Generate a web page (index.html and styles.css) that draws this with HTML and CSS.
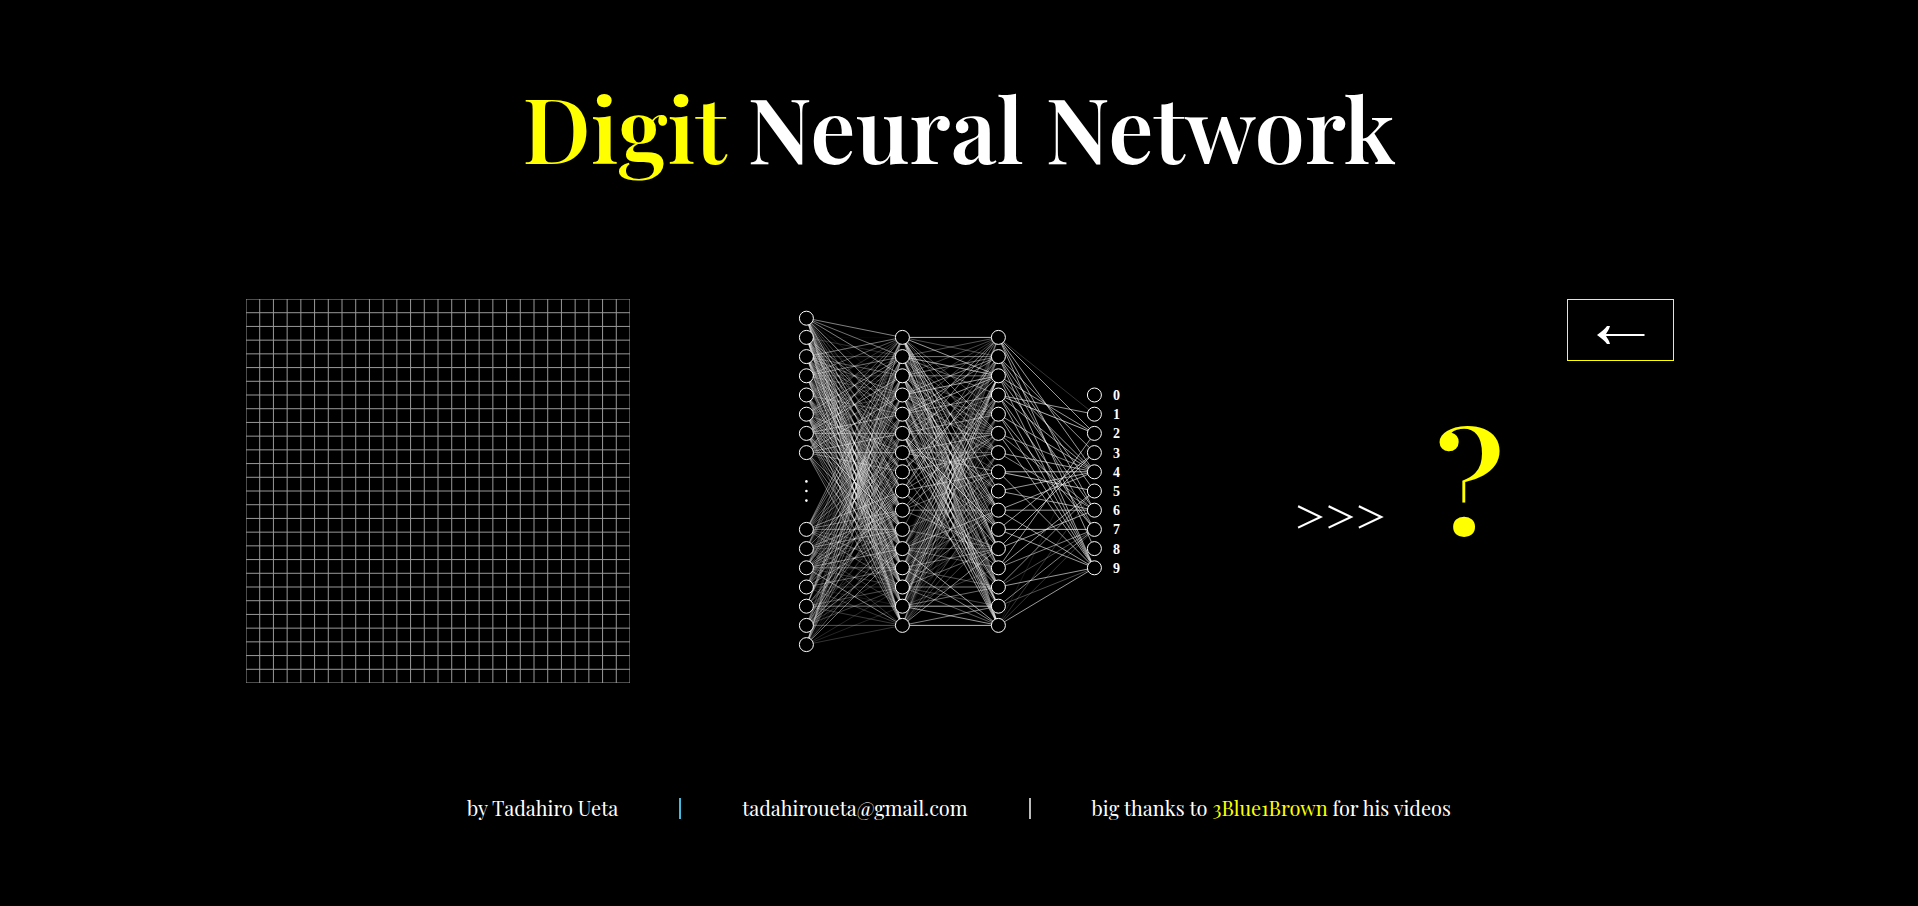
FILE: index.html
```html
<!DOCTYPE html>
<html lang="en">
<head>
  <meta charset="utf-8">
  <meta name="viewport" content="width=device-width, initial-scale=1">
  <title>Digit Neural Network</title>
  <link rel="stylesheet" href="styles.css">
</head>
<body>
  <div class="page">
    <header>
      <h1 class="title"><span class="accent">Digit</span> Neural Network</h1>
    </header>

    <main class="stage">
      <svg class="panel pad" viewBox="0 0 384 384" role="img" aria-label="Drawing pad"></svg>
      <svg class="panel network" viewBox="0 0 384 384" role="img" aria-label="Neural network"></svg>
      <section class="panel result">
        <button class="back" type="button" aria-label="Clear">
          <svg class="arrow" viewBox="0 0 48 20" aria-hidden="true">
            <path d="M0 10C4 7 8 4 10 1H13C12 5 10 7 9 9H47.500V11H9C10 13 12 15 13 19H10C8 16 4 13 0 10Z"/>
          </svg>
        </button>
        <div class="guess">
          <span class="chevrons">&gt;&gt;&gt;</span>
          <output class="digit">?</output>
        </div>
      </section>
    </main>

    <footer class="footer">
      <span>by Tadahiro Ueta</span>
      <span class="bar bar-blue"></span>
      <span>tadahiroueta@gmail.com</span>
      <span class="bar"></span>
      <span>big thanks to <a class="accent" href="#">3Blue1Brown</a> for his videos</span>
    </footer>
  </div>
  <script src="script.js"></script>
</body>
</html>
```

FILE: styles.css
```css
* {
  box-sizing: border-box;
}

body {
  margin: 0;
  background: #000;
  color: #fff;
  font-family: "Playfair Display", "Liberation Serif", serif;
}

.page {
  min-height: 100vh;
  display: flex;
  flex-direction: column;
  align-items: center;
  justify-content: space-between;
  padding: 65px 0 82px;
}

.title {
  margin: 0;
  font-size: 90px;
  line-height: 124px;
  font-weight: 600;
  text-align: center;
}

.accent {
  color: #ff0;
  text-decoration: none;
}

.stage {
  width: 100%;
  padding: 0 244px 0 246px;
  display: flex;
  justify-content: space-between;
}

.panel {
  width: 384px;
  height: 384px;
}

.grid-line {
  stroke: #999;
  stroke-width: 1;
}

.edge {
  stroke: #fff;
  stroke-width: 1;
}

.node {
  fill: #000;
  stroke: #fff;
  stroke-width: 1;
}

.dot {
  fill: #fff;
}

.label {
  fill: #fff;
  font-family: "Liberation Serif", serif;
  font-size: 14px;
  font-weight: 700;
}

.result {
  display: flex;
  flex-direction: column;
}

.back {
  align-self: flex-end;
  width: 107px;
  height: 62px;
  padding: 10px 0 0;
  display: flex;
  align-items: center;
  justify-content: center;
  background: none;
  border: 1px solid #ff0;
  cursor: pointer;
}

.arrow {
  width: 48px;
  height: 20px;
  fill: #fff;
}

.guess {
  display: flex;
  align-items: baseline;
  gap: 50px;
  padding: 36px 0 0 4px;
}

.chevrons {
  font-size: 50px;
}

.digit {
  color: #ff0;
  font-size: 140px;
  line-height: 160px;
  font-weight: 600;
}

.footer {
  display: flex;
  align-items: center;
  justify-content: center;
  gap: 61px;
  font-size: 20px;
  line-height: 32px;
}

.bar {
  width: 2px;
  height: 21px;
  background: #bbb;
}

.bar-blue {
  background: #4bd;
}
```

FILE: script.js
```js
const SVG = "http://www.w3.org/2000/svg";

function add(parent, tag, attrs, text) {
  const el = document.createElementNS(SVG, tag);
  for (const key in attrs) el.setAttribute(key, attrs[key]);
  if (text !== undefined) el.textContent = text;
  parent.appendChild(el);
}

// Drawing pad: 28 x 28 cells
const pad = document.querySelector(".pad");
for (let i = 0; i <= 28; i++) {
  const p = (i * 384) / 28;
  add(pad, "line", { class: "grid-line", x1: p, y1: 0, x2: p, y2: 384 });
  add(pad, "line", { class: "grid-line", x1: 0, y1: p, x2: 384, y2: p });
}

// Network layers, given as row numbers on a 20-row canvas
const range = (from, to) => Array.from({ length: to - from + 1 }, (_, i) => from + i);
const step = 384 / 20;
const layers = [
  { x: 38.4, rows: [...range(1, 8), ...range(12, 18)] },
  { x: 134.4, rows: range(2, 17) },
  { x: 230.4, rows: range(2, 17) },
  { x: 326.4, rows: range(5, 14) }
];

// Edge strengths from each node of the last hidden layer to the outputs 0-9
const outputEdges = [
  "0260606060", "0006060506", "0060606006", "0670600606",
  "0000600606", "0000505006", "0000605000", "0000770006",
  "0000606000", "0000606006", "0006000706", "0006006000",
  "0060060500", "0000050306", "0000000503", "0010020206"
];

let seed = 73;
function random() {
  seed = (seed + 0x6d2b79f5) | 0;
  let t = Math.imul(seed ^ (seed >>> 15), 1 | seed);
  t = (t + Math.imul(t ^ (t >>> 7), 61 | t)) ^ t;
  return ((t ^ (t >>> 14)) >>> 0) / 4294967296;
}

function strength(layer, i, j) {
  if (layer === 2) return Number(outputEdges[i][j]) / 10;
  const r = random();
  if (layer === 0) {
    if (i === 0 && j === 0) return 0.5;
    if (i === 14 && j === 15) return 0.2;
    if (i === 7 && j === 6) return 0.5;
    if (i < 8) return j - i > 3 ? 0.2 + r * 0.4 : r * 0.5;
    return r < 0.15 ? 0 : r * 0.5;
  }
  if (i === j && (i === 0 || i === 15)) return 0.75;
  if (i === 14 && j === 14) return 0.7;
  if (i === 0 && j < 3) return j * 0.3;
  if (i === 15 && j > 11) return j === 14 ? 0.5 : 0;
  if (i > 5 && i < 11 && r < 0.65) return 0;
  if (i < 6 && j > 7) return r < 0.15 ? 0 : 0.15 + r * 0.55;
  if (j === 15 || j === 2) return 0.3 + r * 0.35;
  if (i > 9 && j < 9) return r * 0.35;
  return r < 0.4 ? 0 : r * 0.5;
}

const network = document.querySelector(".network");
for (let l = 0; l < 3; l++) {
  layers[l].rows.forEach((a, i) => {
    layers[l + 1].rows.forEach((b, j) => {
      const opacity = strength(l, i, j);
      if (opacity === 0) return;
      add(network, "line", {
        class: "edge", x1: layers[l].x, y1: a * step,
        x2: layers[l + 1].x, y2: b * step, "stroke-opacity": opacity
      });
    });
  });
}
for (const layer of layers) {
  for (const row of layer.rows) {
    add(network, "circle", { class: "node", cx: layer.x, cy: row * step, r: 7 });
  }
}
for (const row of [9.5, 10, 10.5]) {
  add(network, "circle", { class: "dot", cx: 38.4, cy: row * step, r: 1.3 });
}
layers[3].rows.forEach((row, digit) => {
  add(network, "text", { class: "label", x: 345, y: row * step + 5 }, digit);
});
```
